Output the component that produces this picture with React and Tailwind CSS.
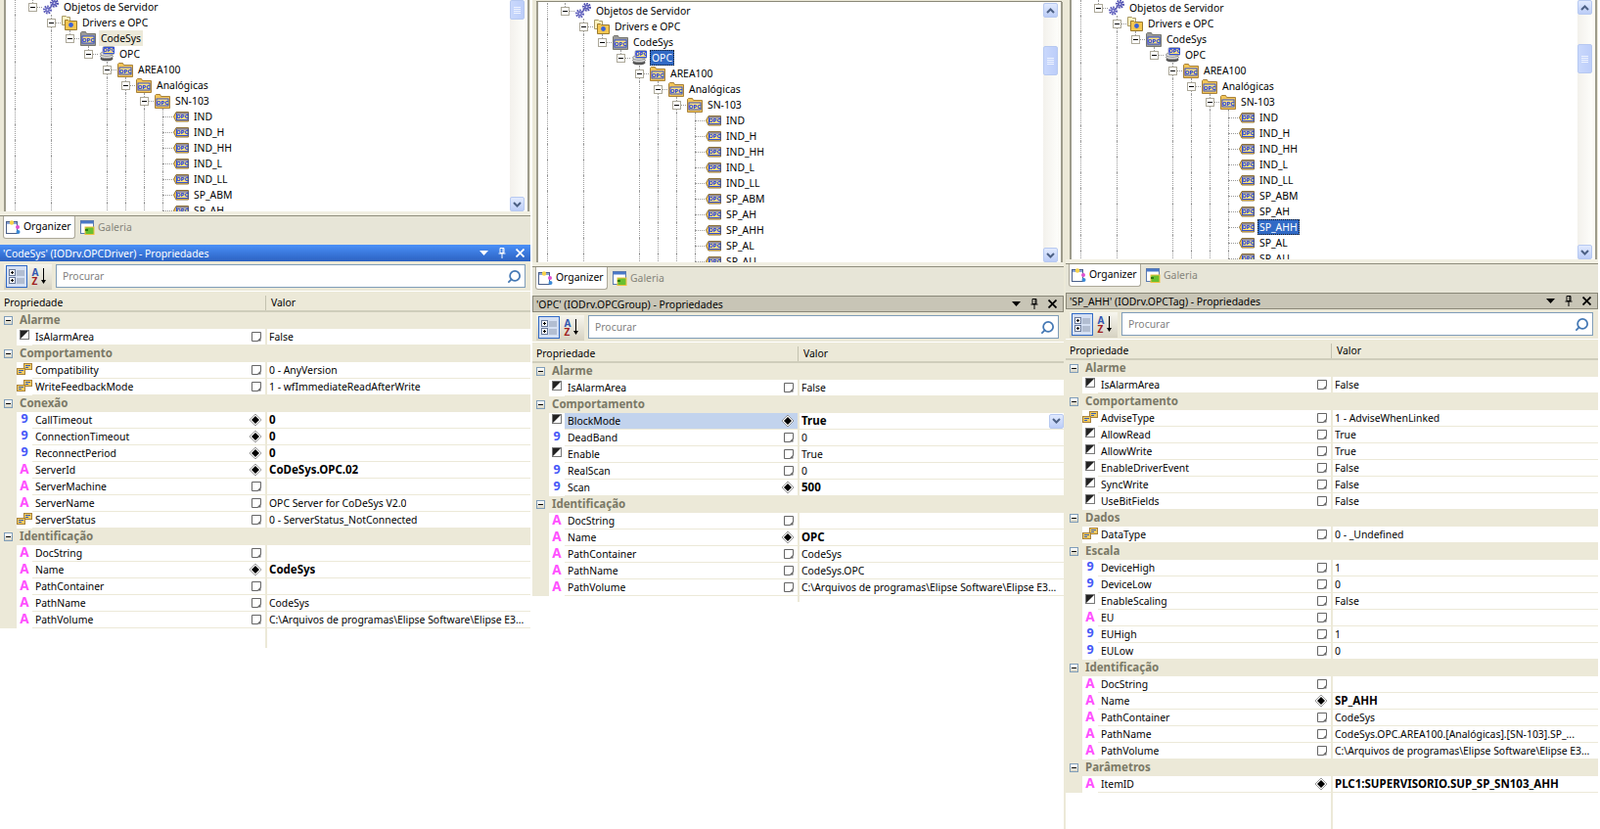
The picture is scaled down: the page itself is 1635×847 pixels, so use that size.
import React from "react";
import { Search } from "lucide-react";

const BEIGE = "bg-[#ece9d8]";

// tree icons
const OpcBadge = ({ x, y, w = 11, h = 7 }) => (
  <g>
    <rect x={x} y={y} width={w} height={h} fill="#ffe27a" stroke="#2346d8" strokeWidth="0.9" />
    <text x={x + w / 2} y={y + h - 1.4} textAnchor="middle" fontSize="5.4" fontWeight="700" fontFamily="DejaVu Sans" fill="#1c3fe0">
      OPC
    </text>
  </g>
);

const Gears = () => (
  <svg width="16" height="16" viewBox="0 0 16 16" className="shrink-0">
    <circle cx="4.5" cy="11" r="3.2" fill="none" stroke="#5a5ab8" strokeWidth="2.6" strokeDasharray="1.5 0.9" />
    <circle cx="4.5" cy="11" r="2.4" fill="#6a6ac4" />
    <circle cx="4.5" cy="11" r="0.9" fill="#d4d4f4" />
    <circle cx="11.5" cy="4.2" r="3.2" fill="none" stroke="#4c4cae" strokeWidth="2.6" strokeDasharray="1.5 0.9" />
    <circle cx="11.5" cy="4.2" r="2.4" fill="#5c5cb8" />
    <circle cx="11.5" cy="4.2" r="0.9" fill="#d4d4f4" />
    <path d="M6.5 9.5l3-3" stroke="#5c5cb4" strokeWidth="1.5" />
  </svg>
);

const DriversFolder = () => (
  <svg width="16" height="16" viewBox="0 0 16 16" className="shrink-0">
    <path d="M0.5 1.5h4l1 1h3v8h-8z" fill="#fff2c0" stroke="#a89a68" />
    <path d="M3.5 5.5h3l1 1h8v9h-12z" fill="#f4c650" stroke="#9a7a30" />
    <circle cx="9.5" cy="10.5" r="2.4" fill="#3a62d8" />
  </svg>
);

const OpcFolder = ({ gray }) => (
  <svg width="16" height="16" viewBox="0 0 16 16" className="shrink-0">
    <path
      d="M0.5 2.5l1-1h4l1 2h9v12h-15z"
      fill={gray ? "#9a9a9a" : "#f2c558"}
      stroke={gray ? "#77776f" : "#a8813a"}
    />
    <OpcBadge x={2} y={6} w={12} h={7} />
  </svg>
);

const OpcServer = () => (
  <svg width="16" height="16" viewBox="0 0 16 16" className="shrink-0">
    <ellipse cx="8" cy="13" rx="6.5" ry="2.3" fill="#555" />
    <ellipse cx="8" cy="10.5" rx="6.5" ry="2.3" fill="#ddd" stroke="#666" strokeWidth="0.7" />
    <ellipse cx="8" cy="8" rx="6.5" ry="2.3" fill="#eee" stroke="#666" strokeWidth="0.7" />
    <rect x="4" y="0.5" width="12" height="8" rx="1.5" fill="#fff" stroke="#8a8a8a" strokeWidth="0.7" />
    <OpcBadge x={5} y={1.5} w={10.5} h={6} />
  </svg>
);

const OpcTag = () => (
  <svg width="16" height="16" viewBox="0 0 16 16" className="shrink-0">
    <path d="M3 3.5h12.5v9.5H3L0.5 8.2z" fill="#f0c25a" stroke="#8d7238" />
    <OpcBadge x={3.5} y={5} w={11.5} h={6.5} />
  </svg>
);

const treeIcons = {
  gears: Gears,
  drivers: DriversFolder,
  gray: () => <OpcFolder gray />,
  folder: () => <OpcFolder />,
  server: OpcServer,
  tag: OpcTag,
};

const TREE = [
  { d: 0, label: "Objetos de Servidor", icon: "gears", open: true },
  { d: 1, label: "Drivers e OPC", icon: "drivers", open: true },
  { d: 2, label: "CodeSys", icon: "gray", open: true },
  { d: 3, label: "OPC", icon: "server", open: true },
  { d: 4, label: "AREA100", icon: "folder", open: true },
  { d: 5, label: "Analógicas", icon: "folder", open: true },
  { d: 6, label: "SN-103", icon: "folder", open: true },
  ...["IND", "IND_H", "IND_HH", "IND_L", "IND_LL", "SP_ABM", "SP_AH", "SP_AHH", "SP_AL", "SP_AU"].map((label) => ({
    d: 7,
    label,
    icon: "tag",
  })),
];

// levels whose dotted line keeps running down the tree
const THROUGH = [-1, 1, 4, 5, 6, 7];

const Guide = ({ index }) => (
  <div className={`h-4 shrink-0 ${index === -1 ? "w-[18px]" : "w-[19px]"} flex justify-center`}>
    {THROUGH.includes(index) && <div className="h-full border-l border-dotted border-[#9a9a9a]" />}
  </div>
);

const TreeRow = ({ row, selected }) => {
  const Icon = treeIcons[row.icon];
  const guides = [];
  for (let i = -1; i < row.d; i++) guides.push(i);
  let labelClass = "";
  if (selected === row.label) labelClass = "bg-[#316ac5] text-white outline-1 outline-dotted -outline-offset-1 outline-[#1a1a1a]";
  if (selected === "inactive:" + row.label) labelClass = BEIGE;

  return (
    <div className="flex h-4 shrink-0 items-center">
      {guides.map((i) => (
        <Guide key={i} index={i} />
      ))}
      <div className="relative h-4 w-[19px] shrink-0">
        <div
          className={`absolute left-[9px] top-0 border-l border-dotted border-[#9a9a9a] ${
            THROUGH.includes(row.d) ? "h-4" : "h-[4px]"
          }`}
        />
        <div className="absolute left-[9px] right-0 top-[8px] border-t border-dotted border-[#9a9a9a]" />
        {row.open && (
          <div className="absolute left-[5px] top-[4px] flex h-[9px] w-[9px] items-center justify-center border border-[#aca899] bg-white">
            <div className="h-px w-[5px] bg-black" />
          </div>
        )}
      </div>
      <div className="ml-px flex shrink-0">
        <Icon />
      </div>
      <span className={`ml-[3px] flex h-4 items-center whitespace-nowrap px-[2px] pt-[2px] ${labelClass}`}>{row.label}</span>
    </div>
  );
};

const Chevron = ({ up }) => (
  <svg width="9" height="6" viewBox="0 0 9 6">
    <path d={up ? "M1 5l3.5-3.5L8 5" : "M1 1l3.5 3.5L8 1"} fill="none" stroke="#4d6185" strokeWidth="2" />
  </svg>
);

const ScrollButton = ({ up }) => (
  <div className="flex h-[15px] w-[15px] shrink-0 items-center justify-center rounded-[2px] border border-[#b7c9f1] bg-gradient-to-b from-[#e1eafe] to-[#bccdf7]">
    <Chevron up={up} />
  </div>
);

const ScrollBar = ({ up, before, thumb }) => (
  <div className="flex w-[15px] shrink-0 flex-col bg-gradient-to-r from-[#f3f1ec] to-[#fdfdfa]">
    {up && <ScrollButton up />}
    <div className="shrink-0" style={{ height: before }} />
    <div
      className="flex w-[15px] shrink-0 flex-col items-center justify-center gap-px rounded-[2px] border border-[#b7c9f1] bg-gradient-to-r from-[#c9d8fc] to-[#bdcefa]"
      style={{ height: thumb }}
    >
      <div className="h-px w-[7px] bg-[#eef3ff]" />
      <div className="h-px w-[7px] bg-[#eef3ff]" />
      <div className="h-px w-[7px] bg-[#eef3ff]" />
      <div className="h-px w-[7px] bg-[#eef3ff]" />
    </div>
    <div className="flex-1" />
    <ScrollButton />
  </div>
);

const OrganizerIcon = () => (
  <svg width="15" height="15" viewBox="0 0 15 15" className="shrink-0">
    <rect x="0.5" y="1.5" width="11" height="12" fill="#fff" stroke="#4a5f8a" />
    <rect x="1" y="2" width="10" height="2" fill="#8aa4d8" />
    <circle cx="6" cy="2.5" r="2.2" fill="#f6d24a" />
    <circle cx="12" cy="7" r="2" fill="#e050d0" />
    <circle cx="12.5" cy="12" r="2" fill="#3a8ad8" />
  </svg>
);

const GaleriaIcon = () => (
  <svg width="15" height="15" viewBox="0 0 15 15" className="shrink-0">
    <rect x="0.5" y="0.5" width="13" height="13" fill="#fff" stroke="#5a7ab0" />
    <rect x="1" y="1" width="12" height="2.5" fill="#4a78c8" />
    <rect x="5" y="7" width="9" height="7.5" fill="#6ac030" stroke="#f0c040" />
    <path d="M5 10h3" stroke="#2f7a10" strokeWidth="2" />
  </svg>
);

const MenuArrow = ({ light }) => (
  <svg width="9" height="5" viewBox="0 0 9 5" className="shrink-0">
    <path d="M0 0h9L4.5 5z" fill={light ? "#fff" : "#000"} />
  </svg>
);

const PinIcon = ({ light }) => (
  <svg width="8" height="11" viewBox="0 0 8 11" className="shrink-0">
    <path d="M2 .5h4v5H2zM.5 6h7M4 6v5M5 1v4" fill="none" stroke={light ? "#fff" : "#000"} />
  </svg>
);

const CloseIcon = ({ light }) => (
  <svg width="9" height="9" viewBox="0 0 9 9" className="shrink-0">
    <path d="M.5.5l8 8M8.5.5l-8 8" stroke={light ? "#fff" : "#000"} strokeWidth="1.8" />
  </svg>
);

const CategoryIcon = () => (
  <svg width="17" height="17" viewBox="0 0 17 17">
    <rect x="0.5" y="1.5" width="6" height="6" fill="#fff" stroke="#6a7a9a" />
    <path d="M2 4.5h3M3.5 3v3" stroke="#000" />
    <rect x="0.5" y="9.5" width="6" height="6" fill="#fff" stroke="#6a7a9a" />
    <path d="M2 12.5h3M3.5 11v3" stroke="#000" />
    <path d="M8 3h8M8 5h8M8 7h8M8 11h8M8 13h8M8 15h8" stroke="#8f9bb0" />
  </svg>
);

const SortIcon = () => (
  <div className="flex w-[20px] items-center justify-center gap-[3px]">
    <div className="flex flex-col text-[10px] font-bold leading-[9px] [font-family:'Liberation_Serif',serif]">
      <span className="text-[#3357b0]">A</span>
      <span className="text-[#a02020]">Z</span>
    </div>
    <svg width="5" height="17" viewBox="0 0 5 17">
      <path d="M2.5 0v13" stroke="#000" />
      <path d="M0 12h5l-2.5 4z" fill="#000" />
    </svg>
  </div>
);

// property icons
const PropIcon = ({ type }) => {
  if (type === "a")
    return <span className="text-[13.5px] font-bold leading-none text-[#ff50ff] [font-family:'DejaVu_Sans',sans-serif]">A</span>;
  if (type === "9")
    return <span className="text-[12.5px] font-bold leading-none text-[#4458f8] [font-family:'DejaVu_Sans',sans-serif]">9</span>;
  if (type === "c")
    return (
      <svg width="10" height="10" viewBox="0 0 10 10">
        <rect x="0.5" y="0.5" width="9" height="9" fill="#fff" stroke="#777" />
        <path d="M1 1h8L1 9z" fill="#222" />
      </svg>
    );
  return (
    <svg width="16" height="13" viewBox="0 0 16 13">
      <rect x="7.5" y="0.5" width="8" height="6" fill="#f2cc60" stroke="#a8813a" />
      <path d="M9 2.5h5M9 4.5h3" stroke="#3a5fb0" />
      <rect x="0.5" y="5.5" width="8" height="6" fill="#f2cc60" stroke="#a8813a" />
      <path d="M2 7.5h5M2 9.5h3" stroke="#3a5fb0" />
    </svg>
  );
};

const SplitIcon = () => (
  <svg width="10" height="10" viewBox="0 0 10 10" className="shrink-0">
    <path d="M.5.5h9v6l-3 3h-6z" fill="#fff" stroke="#666" />
    <path d="M5.5 9.5l4-4v4z" fill="#666" />
  </svg>
);

const DiamondIcon = () => (
  <svg width="12" height="12" viewBox="0 0 12 12" className="shrink-0">
    <path d="M6 0l6 6-6 6-6-6z" fill="#fff" stroke="#555" strokeWidth="0.6" />
    <path d="M6 2l4 4-4 4-4-4z" fill="#000" />
  </svg>
);

const GroupRow = ({ label }) => (
  <div className={`flex h-[17px] shrink-0 items-center ${BEIGE}`}>
    <div className="ml-[4px] flex h-[9px] w-[9px] items-center justify-center border border-[#7f9db9] bg-gradient-to-b from-white to-[#d8d5c5]">
      <div className="h-px w-[5px] bg-black" />
    </div>
    <span className="ml-[7px] pb-[2px] text-[11.5px] font-bold text-[#7b7967] [font-family:'DejaVu_Sans',sans-serif]">{label}</span>
  </div>
);

const PropRow = ({ name, icon, value, bold, selected }) => (
  <div className={`flex h-[17px] shrink-0 ${BEIGE}`}>
    <div className="w-[17px] shrink-0" />
    <div className="flex w-[16px] shrink-0 items-start justify-center bg-white pt-px">
      <PropIcon type={icon} />
    </div>
    <div
      className={`flex w-[238px] shrink-0 items-center justify-between border-b border-[#ece9d8] pl-[3px] pr-[4px] ${
        selected ? "bg-[#c2d3ed]" : "bg-white"
      }`}
    >
      <span className="whitespace-nowrap pt-[2px]">{name}</span>
      {bold ? <DiamondIcon /> : <SplitIcon />}
    </div>
    <div className="w-[2px] shrink-0" />
    <div className="flex min-w-0 flex-1 items-center justify-between border-b border-[#ece9d8] bg-white pl-[2px]">
      <span className={`truncate ${bold ? "text-[11.5px] font-bold [font-family:'DejaVu_Sans',sans-serif]" : "pt-[2px]"}`}>{value}</span>
      {selected && (
        <div className="flex h-[15px] w-[15px] shrink-0 items-center justify-center rounded-[2px] border border-[#b7c9f1] bg-gradient-to-b from-[#e1eafe] to-[#bccdf7]">
          <Chevron />
        </div>
      )}
    </div>
  </div>
);

const PropertyGrid = ({ groups, selected, lineHeight }) => (
  <div className="flex min-h-0 flex-1 flex-col bg-white">
    {groups.map((g) => (
      <React.Fragment key={g.label}>
        <GroupRow label={g.label} />
        {g.rows.map((r) => (
          <PropRow
            key={r[0]}
            name={r[0]}
            icon={r[1]}
            value={r[2]}
            bold={r[3]}
            selected={selected === r[0]}
          />
        ))}
      </React.Fragment>
    ))}
    {/* value column divider runs on below the last row */}
    <div className={`ml-[271px] w-[2px] ${BEIGE} ${lineHeight}`} />
  </div>
);

const Panel = ({ width, treeHeight, topGap, rowsOffset, selected, scroll, title, active, groups, selectedProp, lineHeight, edge }) => (
  <div className={`flex h-full shrink-0 flex-col pr-[2px] ${edge ? BEIGE : ""}`} style={{ width }}>
    <div className={`flex shrink-0 flex-col ${BEIGE} ${topGap ? "pt-px" : ""}`}>
      {topGap && <div className="h-px ml-[4px] mr-[2px] bg-[#8a8878]" />}
      <div className="ml-[4px] mr-[1px] flex overflow-hidden border-x-2 border-x-[#9d9b8b] bg-white" style={{ height: treeHeight }}>
        <div className="min-w-0 flex-1 overflow-hidden" style={{ marginTop: rowsOffset }}>
          {TREE.map((row) => (
            <TreeRow key={row.label} row={row} selected={selected} />
          ))}
        </div>
        <div className={`flex shrink-0 bg-[#fbfaf6] pr-[3px] ${topGap ? "pt-[1px]" : ""}`}>
          <ScrollBar up={scroll.up} before={scroll.before} thumb={scroll.thumb} />
        </div>
      </div>
      <div className="h-[4px] bg-[#f1efe2]" />
    </div>

    <div className="flex h-[30px] shrink-0 items-start gap-[5px] border-t border-[#8f8d7c] bg-[#e7e5d7] pl-[3px]">
      <div className="flex h-[23px] w-[74px] items-center gap-[3px] rounded-b-[3px] border border-t-0 border-[#aca899] bg-white pl-[2px]">
        <OrganizerIcon />
        <span>Organizer</span>
      </div>
      <div className="flex h-[23px] items-center gap-[3px] text-[#85847a]">
        <GaleriaIcon />
        <span>Galeria</span>
      </div>
    </div>

    <div
      className={`flex h-[17px] shrink-0 items-center pl-[3px] pr-[6px] ${
        active
          ? "bg-gradient-to-b from-[#4a90f8] to-[#2c62c2] text-white"
          : "border border-[#8a8878] bg-[#c8c5b6] text-black"
      }`}
    >
      <span className="flex-1 truncate whitespace-nowrap pt-[2px]">{title}</span>
      <div className="flex items-center gap-[10px]">
        <MenuArrow light={active} />
        <PinIcon light={active} />
        <CloseIcon light={active} />
      </div>
    </div>

    <div className={`flex h-[30px] shrink-0 items-start pt-[3px] pl-[4px] pr-[5px] ${BEIGE}`}>
      <div className="flex h-[26px] w-[49px] shrink-0 items-start gap-[2px] bg-gradient-to-b from-[#f7f6ee] to-[#d6d2c2] pl-[2px] pt-px">
        <div className="flex h-[23px] w-[22px] items-center justify-center border border-[#316ac5] bg-[#d5e0f3]">
          <CategoryIcon />
        </div>
        <div className="flex h-[23px] items-center">
          <SortIcon />
        </div>
      </div>
      <div className="ml-[4px] flex h-6 flex-1 items-center justify-between border border-[#7f9db9] bg-white pl-[6px] pr-[3px] text-[#7f7f7f]">
        <span className="pt-[2px]">Procurar</span>
        <Search size={15} strokeWidth={2.8} className="-scale-x-100 text-[#4478b4]" />
      </div>
    </div>
    <div className="h-px shrink-0 bg-white" />

    <div className={`flex h-[21px] shrink-0 border-b-2 border-[#cfcdbb] pt-[4px] ${BEIGE}`}>
      <div className="flex w-[271px] items-center pl-[4px]">Propriedade</div>
      <div className="w-px bg-[#c4c2b0]" />
      <div className="flex items-center pl-[5px]">Valor</div>
    </div>

    <PropertyGrid groups={groups} selected={selectedProp} lineHeight={lineHeight} />
  </div>
);

const IDENT = (name, container, pathName, volume) => ({
  label: "Identificação",
  rows: [
    ["DocString", "a", ""],
    ["Name", "a", name, true],
    ["PathContainer", "a", container],
    ["PathName", "a", pathName],
    ["PathVolume", "a", volume],
  ],
});

const ALARM = { label: "Alarme", rows: [["IsAlarmArea", "c", "False"]] };
const VOL = "C:\\Arquivos de programas\\Elipse Software\\Elipse E3...";

const GROUPS_DRIVER = [
  ALARM,
  {
    label: "Comportamento",
    rows: [
      ["Compatibility", "e", "0 - AnyVersion"],
      ["WriteFeedbackMode", "e", "1 - wfImmediateReadAfterWrite"],
    ],
  },
  {
    label: "Conexão",
    rows: [
      ["CallTimeout", "9", "0", true],
      ["ConnectionTimeout", "9", "0", true],
      ["ReconnectPeriod", "9", "0", true],
      ["ServerId", "a", "CoDeSys.OPC.02", true],
      ["ServerMachine", "a", ""],
      ["ServerName", "a", "OPC Server for CoDeSys V2.0"],
      ["ServerStatus", "e", "0 - ServerStatus_NotConnected"],
    ],
  },
  IDENT("CodeSys", "", "CodeSys", VOL),
];

const GROUPS_GROUP = [
  ALARM,
  {
    label: "Comportamento",
    rows: [
      ["BlockMode", "c", "True", true],
      ["DeadBand", "9", "0"],
      ["Enable", "c", "True"],
      ["RealScan", "9", "0"],
      ["Scan", "9", "500", true],
    ],
  },
  IDENT("OPC", "CodeSys", "CodeSys.OPC", VOL),
];

const GROUPS_TAG = [
  ALARM,
  {
    label: "Comportamento",
    rows: [
      ["AdviseType", "e", "1 - AdviseWhenLinked"],
      ["AllowRead", "c", "True"],
      ["AllowWrite", "c", "True"],
      ["EnableDriverEvent", "c", "False"],
      ["SyncWrite", "c", "False"],
      ["UseBitFields", "c", "False"],
    ],
  },
  { label: "Dados", rows: [["DataType", "e", "0 - _Undefined"]] },
  {
    label: "Escala",
    rows: [
      ["DeviceHigh", "9", "1"],
      ["DeviceLow", "9", "0"],
      ["EnableScaling", "c", "False"],
      ["EU", "a", ""],
      ["EUHigh", "9", "1"],
      ["EULow", "9", "0"],
    ],
  },
  IDENT("SP_AHH", "CodeSys", "CodeSys.OPC.AREA100.[Analógicas].[SN-103].SP_...", VOL),
  { label: "Parâmetros", rows: [["ItemID", "a", "PLC1:SUPERVISORIO.SUP_SP_SN103_AHH", true]] },
];

export default function App() {
  return (
    <div className="flex h-[847px] w-[1635px] overflow-hidden bg-white text-[10.4px] text-black [font-family:'Noto_Sans',sans-serif]">
      <Panel
        width={544}
        treeHeight={216}
        rowsOffset={-1}
        selected="inactive:CodeSys"
        scroll={{ up: false, before: 0, thumb: 20 }}
        title="'CodeSys' (IODrv.OPCDriver) - Propriedades"
        active
        groups={GROUPS_DRIVER}
        lineHeight="h-[20px]"
      />
      <Panel
        width={545}
        treeHeight={266}
        topGap
        rowsOffset={1}
        selected="OPC"
        scroll={{ up: true, before: 29, thumb: 30 }}
        title="'OPC' (IODrv.OPCGroup) - Propriedades"
        groups={GROUPS_GROUP}
        selectedProp="BlockMode"
        lineHeight="h-[6px]"
        edge
      />
      <Panel
        width={546}
        treeHeight={265}
        rowsOffset={0}
        selected="SP_AHH"
        scroll={{ up: true, before: 30, thumb: 30 }}
        title="'SP_AHH' (IODrv.OPCTag) - Propriedades"
        groups={GROUPS_TAG}
        lineHeight="h-[40px]"
      />
    </div>
  );
}
